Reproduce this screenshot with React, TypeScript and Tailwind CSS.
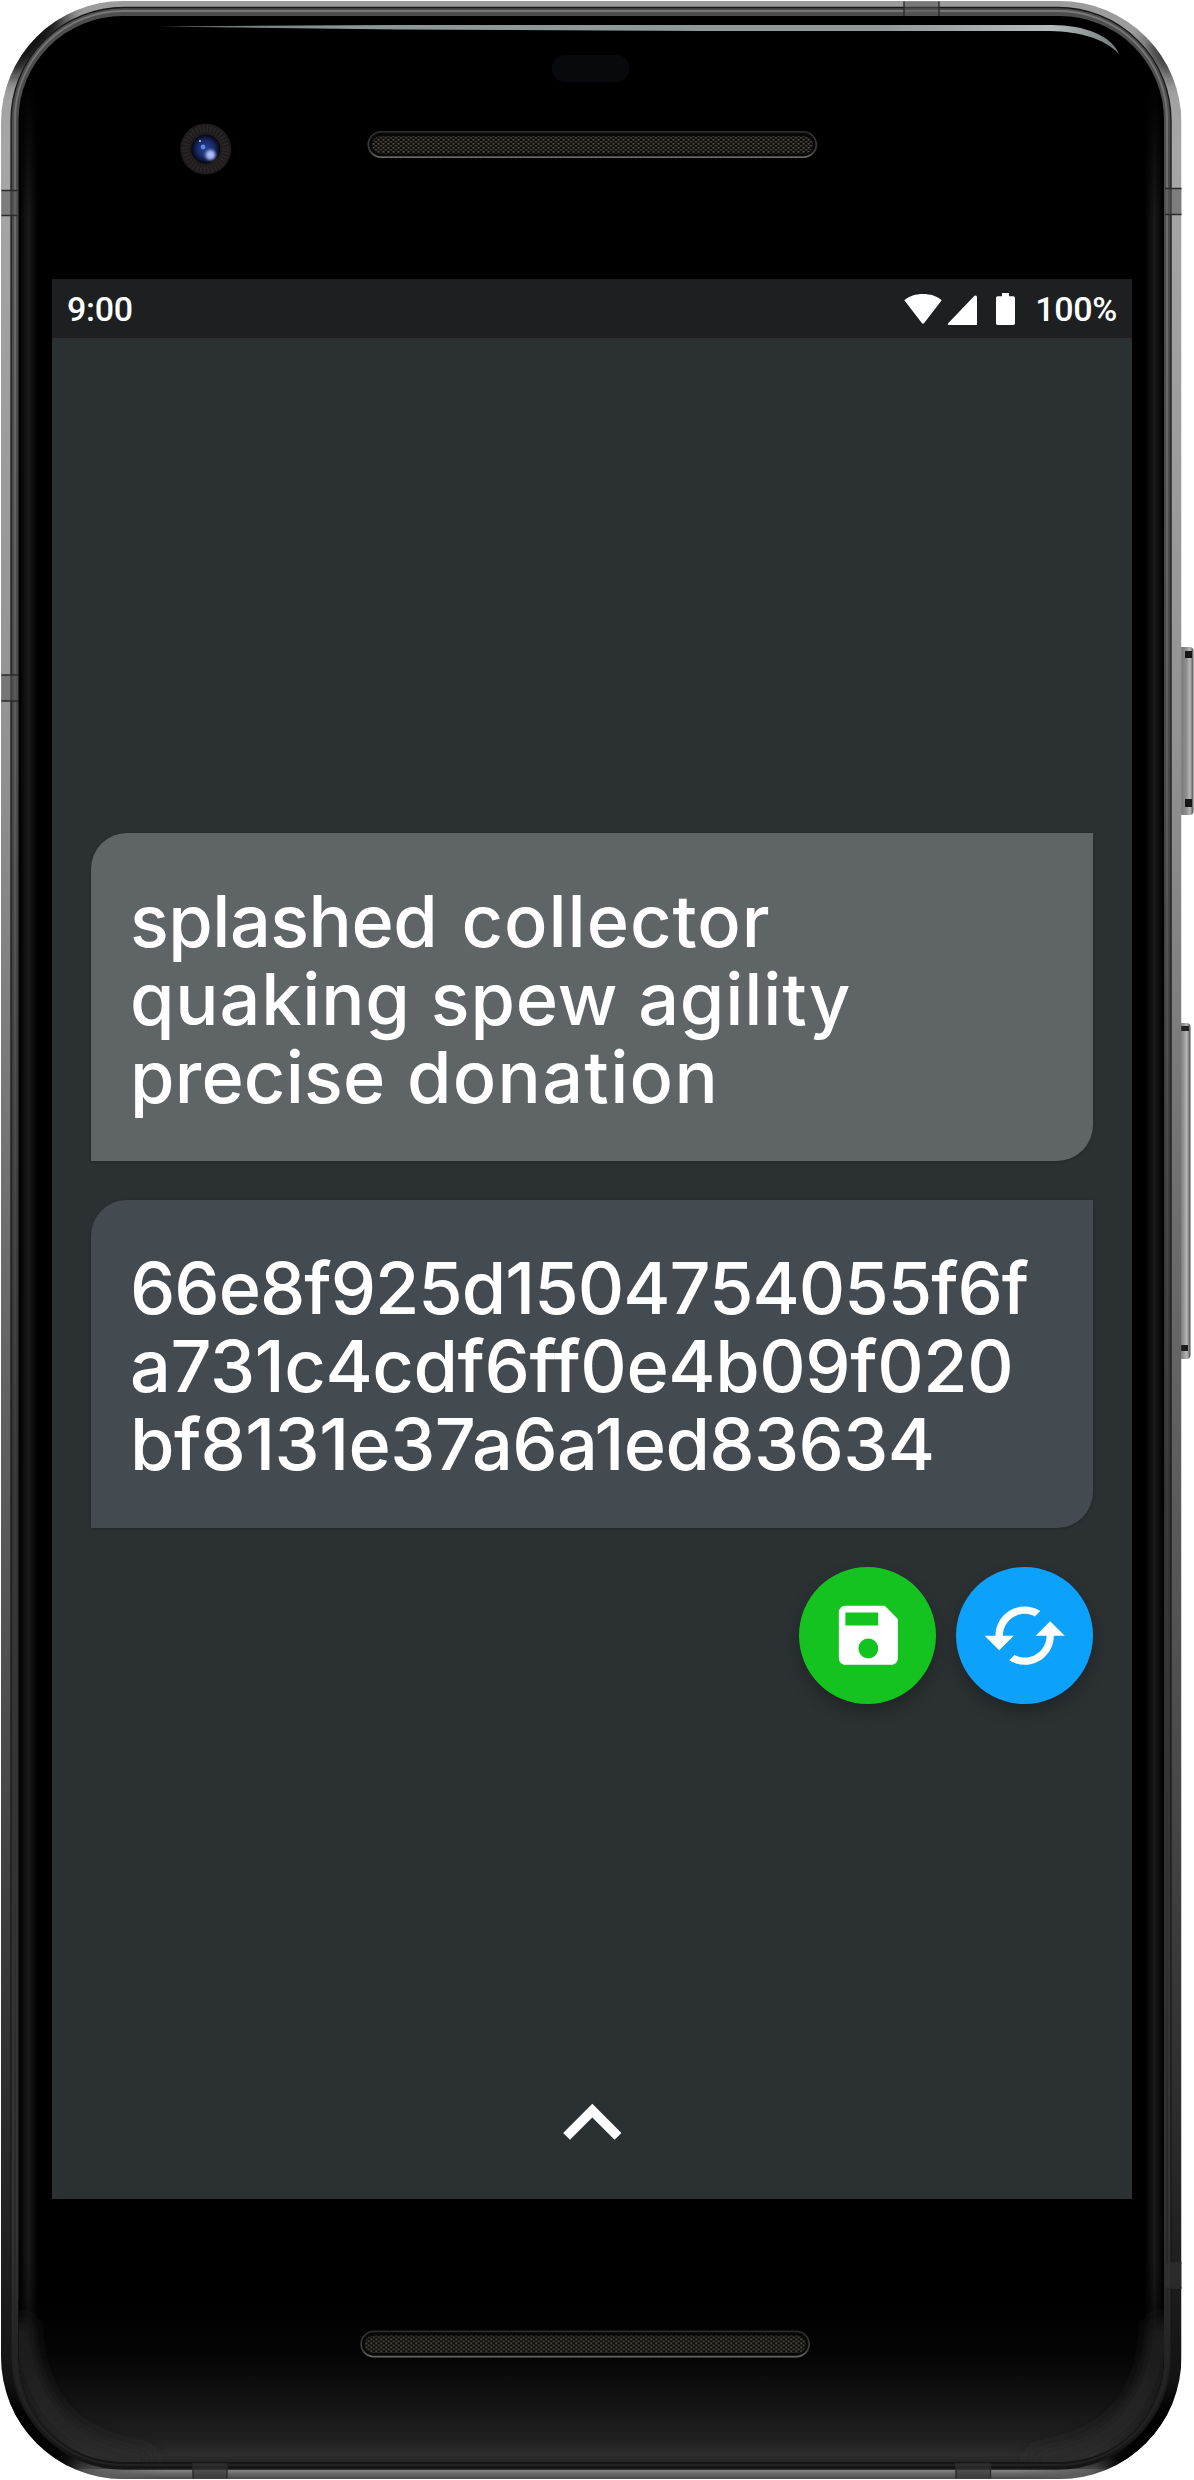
import React from 'react';

function Speaker({ x, y }: { x: number; y: number }) {
  return (
    <g transform={`translate(${x} ${y})`}>
      <rect x="0.8" y="0.8" width="448" height="25.4" rx="12.7" fill="#080808" stroke="url(#grille)" strokeWidth="1.8" />
      <rect x="4.5" y="5" width="441" height="17.5" rx="8.7" fill="url(#mesh)" />
    </g>
  );
}

function DeviceFrame() {
  return (
    <svg className="absolute inset-0" width="1194" height="2480" viewBox="0 0 1194 2480" fill="none">
      <defs>
        <linearGradient id="rim" x1="0" y1="0" x2="0" y2="1">
          <stop offset="0" stopColor="#9b9b9b" />
          <stop offset="0.06" stopColor="#a6a6a6" />
          <stop offset="0.3" stopColor="#929292" />
          <stop offset="0.5" stopColor="#6c6c6c" />
          <stop offset="0.72" stopColor="#484848" />
          <stop offset="0.88" stopColor="#262626" />
          <stop offset="0.97" stopColor="#111" />
          <stop offset="0.991" stopColor="#1d1d1d" />
          <stop offset="1" stopColor="#6a6a6a" />
        </linearGradient>
        <linearGradient id="rimInner" x1="0" y1="0" x2="0" y2="1">
          <stop offset="0" stopColor="#4e4e4e" />
          <stop offset="0.3" stopColor="#4b4b4b" />
          <stop offset="0.6" stopColor="#343434" />
          <stop offset="0.9" stopColor="#343434" />
          <stop offset="1" stopColor="#151515" />
        </linearGradient>
        <linearGradient id="hair" x1="0" y1="0" x2="0" y2="1">
          <stop offset="0" stopColor="#777" />
          <stop offset="0.3" stopColor="#5e5e5e" />
          <stop offset="0.6" stopColor="#3b3b3b" />
          <stop offset="1" stopColor="#222" />
        </linearGradient>
        <linearGradient id="bottomRim" x1="0" y1="2469" x2="0" y2="2479" gradientUnits="userSpaceOnUse">
          <stop offset="0" stopColor="#8c8c8c" />
          <stop offset="0.5" stopColor="#666" />
          <stop offset="1" stopColor="#484848" />
        </linearGradient>
        <linearGradient id="bottomFade" x1="0" y1="0" x2="1" y2="0">
          <stop offset="0" stopColor="#fff" stopOpacity="0" />
          <stop offset="0.1" stopColor="#fff" />
          <stop offset="0.9" stopColor="#fff" />
          <stop offset="1" stopColor="#fff" stopOpacity="0" />
        </linearGradient>
        <mask id="bottomMask">
          <rect x="60" y="2460" width="1062" height="20" fill="url(#bottomFade)" />
        </mask>
        <linearGradient id="edgeFade" x1="0" y1="80" x2="0" y2="2400" gradientUnits="userSpaceOnUse">
          <stop offset="0" stopColor="#fff" stopOpacity="0" />
          <stop offset="0.06" stopColor="#fff" />
          <stop offset="0.94" stopColor="#fff" />
          <stop offset="1" stopColor="#fff" stopOpacity="0" />
        </linearGradient>
        <mask id="edgeMask" maskUnits="userSpaceOnUse" x="0" y="0" width="1194" height="2480">
          <rect x="0" y="80" width="1194" height="2320" fill="url(#edgeFade)" />
        </mask>
        <linearGradient id="chin" x1="0" y1="2300" x2="0" y2="2462" gradientUnits="userSpaceOnUse">
          <stop offset="0" stopColor="#000" />
          <stop offset="0.35" stopColor="#050505" />
          <stop offset="0.65" stopColor="#141414" />
          <stop offset="0.85" stopColor="#1f1f1f" />
          <stop offset="0.96" stopColor="#2d2d2d" />
          <stop offset="1" stopColor="#252525" />
        </linearGradient>
        <linearGradient id="edgeL" x1="19" y1="0" x2="38" y2="0" gradientUnits="userSpaceOnUse">
          <stop offset="0" stopColor="#191919" stopOpacity="0" />
          <stop offset="0.5" stopColor="#191919" />
          <stop offset="1" stopColor="#191919" stopOpacity="0" />
        </linearGradient>
        <linearGradient id="edgeR" x1="1145" y1="0" x2="1164" y2="0" gradientUnits="userSpaceOnUse">
          <stop offset="0" stopColor="#191919" stopOpacity="0" />
          <stop offset="0.5" stopColor="#191919" />
          <stop offset="1" stopColor="#191919" stopOpacity="0" />
        </linearGradient>
        <linearGradient id="shine" x1="155" y1="0" x2="1120" y2="0" gradientUnits="userSpaceOnUse">
          <stop offset="0" stopColor="#5f6a6a" />
          <stop offset="0.2" stopColor="#8b9797" />
          <stop offset="0.75" stopColor="#8f9999" />
          <stop offset="0.93" stopColor="#b4bcbb" />
          <stop offset="1" stopColor="#6f7878" />
        </linearGradient>
        <linearGradient id="grille" x1="0" y1="0" x2="0" y2="1">
          <stop offset="0" stopColor="#2b2b2b" />
          <stop offset="0.75" stopColor="#3c3c3b" />
          <stop offset="1" stopColor="#686660" />
        </linearGradient>
        <pattern id="mesh" width="5" height="4" patternUnits="userSpaceOnUse">
          <rect width="5" height="4" fill="#0b0b0a" />
          <rect x="0" y="0" width="2" height="1.6" fill="#5a554a" />
          <rect x="2.5" y="2" width="2" height="1.6" fill="#5a554a" />
        </pattern>
        <radialGradient id="lens" cx="0.5" cy="0.5" r="0.5">
          <stop offset="0" stopColor="#27408f" />
          <stop offset="0.55" stopColor="#1b2c6c" />
          <stop offset="0.85" stopColor="#0d1333" />
          <stop offset="1" stopColor="#050508" />
        </radialGradient>
        <linearGradient id="key" x1="0" y1="0" x2="1" y2="0">
          <stop offset="0" stopColor="#666" />
          <stop offset="0.6" stopColor="#8e8e8e" />
          <stop offset="0.8" stopColor="#b8b8b8" />
          <stop offset="1" stopColor="#4d4d4d" />
        </linearGradient>
        <filter id="blur8" x="-50%" y="-50%" width="200%" height="200%">
          <feGaussianBlur stdDeviation="9" />
        </filter>
        <filter id="blur2" x="-50%" y="-50%" width="200%" height="200%">
          <feGaussianBlur stdDeviation="1.8" />
        </filter>
        <clipPath id="body">
          <rect x="1" y="1" width="1180.5" height="2478" rx="122" />
        </clipPath>
        <clipPath id="glass">
          <rect x="18.5" y="16" width="1145.5" height="2446" rx="104" />
        </clipPath>
      </defs>

      {/* side keys */}
      <rect x="1176" y="647" width="17.5" height="168" rx="4" fill="url(#key)" />
      <rect x="1185" y="651" width="7" height="7" fill="#161616" />
      <rect x="1185" y="799" width="7" height="8" fill="#161616" />
      <rect x="1172" y="1023" width="18.5" height="336" rx="4" fill="url(#key)" />
      <rect x="1181" y="1026" width="8" height="5" fill="#222" />
      <rect x="1181" y="1345" width="7" height="6" fill="#1c1c1c" />

      {/* metal rim */}
      <g clipPath="url(#body)">
        <rect x="1" y="1" width="1180.5" height="2478" fill="url(#rim)" />
        <ellipse cx="34" cy="42" rx="17" ry="46" transform="rotate(42 34 42)" fill="#0c0c0c" filter="url(#blur8)" />
        <ellipse cx="1163" cy="56" rx="9" ry="26" transform="rotate(-32 1163 56)" fill="#181818" filter="url(#blur8)" />
        <ellipse cx="32" cy="2440" rx="22" ry="60" transform="rotate(-42 32 2440)" fill="#000" filter="url(#blur8)" />
        <ellipse cx="1150" cy="2440" rx="22" ry="60" transform="rotate(42 1150 2440)" fill="#000" filter="url(#blur8)" />
        <rect x="60" y="2469" width="1062" height="10" fill="url(#bottomRim)" mask="url(#bottomMask)" />
      </g>
      <rect x="11" y="7.5" width="1160" height="2461.5" rx="113" fill="url(#rimInner)" />
      <rect x="11" y="7.5" width="1160" height="2461.5" rx="113" stroke="#171717" strokeWidth="1.3" />
      <rect x="15" y="11" width="1152" height="2454" rx="108" stroke="url(#hair)" strokeWidth="1.8" />

      {/* antenna bands */}
      <path d="M1.500 190.500h16v25h-16zM1.500 675h17v26h-17zM1165 188.500h16.500v26H1165zM904 1.500h35v14.500h-35z" fill="#555" fillOpacity="0.5" />
      <path d="M1165 2262.500h16.500V2288H1165zM193 2463h34v15.500h-34zM956 2463h34.500v15.500H956z" fill="#333" fillOpacity="0.65" />
      <path
        d="M1.500 190.500h16M1.500 215.500h16M1.500 675h17M1.500 701h17M1165 188.500h16.500M1165 214.500h16.500M1165 2262.500h16.500M1165 2288h16.500M904 1.500v14.500M939 1.500v14.500M193 2463v15.500M227 2463v15.500M956 2463v15.500M990.500 2463v15.500"
        stroke="#2a2a2a"
        strokeWidth="1.4"
      />

      {/* front glass */}
      <g clipPath="url(#glass)">
        <rect x="18" y="16" width="1147" height="2447" fill="#000" />
        <rect x="18" y="2300" width="1147" height="163" fill="url(#chin)" />
        <path d="M22 2320C24 2400 62 2452 150 2462M1160 2320C1158 2400 1120 2452 1032 2462" stroke="#2b2b2b" strokeWidth="18" filter="url(#blur8)" />
        <g mask="url(#edgeMask)">
          <rect x="19" y="80" width="19" height="2320" fill="url(#edgeL)" />
          <rect x="1145" y="80" width="19" height="2320" fill="url(#edgeR)" />
        </g>
      </g>
      <path d="M158 26.400L400 25H1052C1085 25 1112 36 1119 54C1105 39 1080 31.500 1050 31H700L400 29.500Z" fill="url(#shine)" />

      {/* camera, sensor, earpiece and loudspeaker */}
      <circle cx="205.700" cy="149" r="25.500" fill="#1f1c1d" />
      <circle cx="205.700" cy="149" r="20" stroke="#2b2728" strokeWidth="7" strokeDasharray="1.5 2" />
      <circle cx="205.700" cy="149" r="14.500" fill="url(#lens)" />
      <circle cx="210.500" cy="155" r="5" fill="#a9bcf5" filter="url(#blur2)" />
      <circle cx="203" cy="147" r="2.400" fill="#5f86e6" />
      <circle cx="200" cy="141" r="1.100" fill="#b9c2e6" />
      <rect x="551.700" y="55" width="78" height="27.300" rx="13.600" fill="#08090d" />
      <Speaker x={367.5} y={131} />
      <Speaker x={360.3} y={2330.5} />
    </svg>
  );
}

function StatusBar() {
  return (
    <div className="flex h-[59px] items-center justify-between bg-[#1e1f21] pt-[1px] pr-[15px] pl-[15px] font-['Roboto',sans-serif] text-[34px] leading-10 font-medium text-white">
      <span className="tracking-[-0.3px]">9:00</span>
      <div className="flex items-center">
        <svg width="73" height="32" viewBox="0 0 73 32" fill="#fff">
          <path d="M0.300 7.300C5 3 11.800 1 19 1C26.200 1 33 3 37.700 7.300L20.200 30Q19 31.600 17.800 30Z" />
          <path d="M70.500 2.700Q73 2 73 4.200V32H45.200Q43 32 44.400 30Z" />
        </svg>
        <svg className="ml-[19px]" width="19" height="32" viewBox="0 0 19 32" fill="#fff">
          <path d="M6 0H13V3.300H17.300Q19 3.300 19 5V30.300Q19 32 17.300 32H1.700Q0 32 0 30.300V5Q0 3.300 1.700 3.300H6Z" />
        </svg>
        <span className="ml-5 tracking-[-0.3px]">100%</span>
      </div>
    </div>
  );
}

function Card({ tone, children }: { tone: string; children: React.ReactNode }) {
  return (
    <div className={`h-[328px] w-[1002px] rounded-tl-[36px] rounded-br-[36px] pt-[49px] pl-[39px] font-['Inter',sans-serif] text-[72px] leading-[78px] font-medium whitespace-nowrap text-white shadow-[0_1px_3px_rgba(0,0,0,0.2)] ${tone}`}>
      {children}
    </div>
  );
}

export default function App() {
  return (
    <div className="relative h-[2480px] w-[1194px] overflow-hidden bg-white">
      <DeviceFrame />
      <div className="relative pt-[279px] pl-[52px]">
        <main className="flex h-[1920px] w-[1080px] flex-col bg-[#2b3032]">
          <StatusBar />
          <section className="mt-[495px] ml-[39px] flex w-[1002px] flex-col gap-[39px]">
            <Card tone="bg-[#5f6466]">
              <div className="tracking-[1px] [word-spacing:4px]">
                <span className="tracking-[-0.5px]">splashed</span> collector
              </div>
              <div className="tracking-[0.82px]">quaking spew agility</div>
              <div className="tracking-[1.3px] [word-spacing:1px]">
                <span className="tracking-[0.2px]">precise</span> donation
              </div>
            </Card>
            <Card tone="bg-[#444b50]">
              <div className="tracking-[-1px]">66e8f925d1504754055f6f</div>
              <div className="tracking-[-0.4px]">a731c4cdf6ff0e4b09f020</div>
              <div className="tracking-[-0.6px]">bf8131e37a6a1ed83634</div>
            </Card>
            <div className="flex justify-end gap-5">
              <button className="flex size-[137px] items-center justify-center rounded-full bg-[#14c31f] pl-[1px] shadow-[0_8px_16px_rgba(0,0,0,0.24)]">
                <svg width="78.700" height="78.700" viewBox="0 0 24 24" fill="#fff">
                  <path d="M17 3H5c-1.110 0-2 .9-2 2v14c0 1.100.890 2 2 2h14c1.100 0 2-.9 2-2V7l-4-4zm-5 16c-1.660 0-3-1.340-3-3s1.340-3 3-3 3 1.340 3 3-1.340 3-3 3zm3-10H5V5h10v4z" />
                </svg>
              </button>
              <button className="flex size-[137px] items-center justify-center rounded-full bg-[#0ca1fb] pl-[1px] shadow-[0_8px_16px_rgba(0,0,0,0.24)]">
                <svg width="87.400" height="87.400" viewBox="0 0 24 24" fill="#fff">
                  <path d="M19 8l-4 4h3c0 3.310-2.690 6-6 6-1.010 0-1.970-.250-2.800-.7l-1.460 1.460C8.970 19.540 10.430 20 12 20c4.420 0 8-3.580 8-8h3l-4-4zM6 12c0-3.310 2.690-6 6-6 1.010 0 1.970.250 2.800.7l1.460-1.460C15.030 4.460 13.570 4 12 4c-4.420 0-8 3.580-8 8H1l4 4 4-4H6z" />
                </svg>
              </button>
            </div>
          </section>
          <svg className="mt-auto mb-[17px] self-center" width="116.600" height="116.600" viewBox="0 0 24 24" fill="#fff">
            <path d="M7.410 15.410L12 10.830l4.590 4.580L18 14l-6-6-6 6z" />
          </svg>
        </main>
      </div>
    </div>
  );
}
